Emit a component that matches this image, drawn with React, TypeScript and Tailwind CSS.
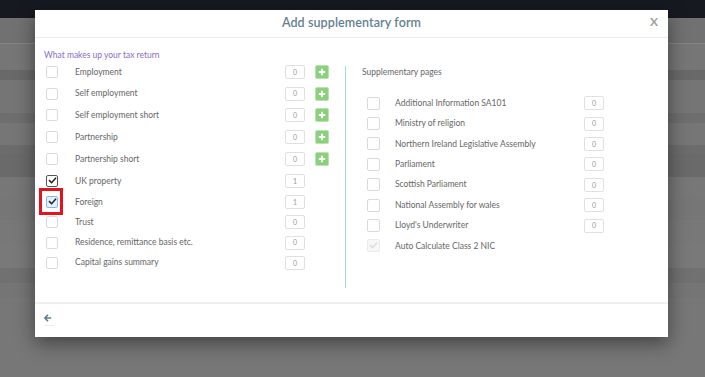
import React from 'react';

const mainRows = [
  { label: 'Employment', value: '0', plus: true, h: 'h-[21.8px]' },
  { label: 'Self employment', value: '0', plus: true, h: 'h-[21.8px]' },
  { label: 'Self employment short', value: '0', plus: true, h: 'h-[21.8px]' },
  { label: 'Partnership', value: '0', plus: true, h: 'h-[21.8px]' },
  { label: 'Partnership short', value: '0', plus: true, h: 'h-[21.8px]' },
  { label: 'UK property', value: '1', checked: true, h: 'h-[21.8px]' },
  { label: 'Foreign', value: '1', checked: true, focused: true, h: 'h-[20.3px]' },
  { label: 'Trust', value: '0', h: 'h-[20.3px]' },
  { label: 'Residence, remittance basis etc.', value: '0', h: 'h-[20.3px]' },
  { label: 'Capital gains summary', value: '0', h: 'h-[20.3px]' },
];

const suppRows = [
  { label: 'Additional Information SA101' },
  { label: 'Ministry of religion' },
  { label: 'Northern Ireland Legislative Assembly' },
  { label: 'Parliament' },
  { label: 'Scottish Parliament' },
  { label: 'National Assembly for wales' },
  { label: "Lloyd's Underwriter" },
  { label: 'Auto Calculate Class 2 NIC', disabled: true },
];

const bands = [
  { h: 'h-[18px]', c: 'bg-[#161a20]' },
  { h: 'h-[25px]', c: 'bg-[#717171]' },
  { h: 'h-[1px]', c: 'bg-[#858585]' },
  { h: 'h-[26px]', c: 'bg-[#767676]' },
  { h: 'h-[10px]', c: 'bg-[#696969]' },
  { h: 'h-[33px]', c: 'bg-[#757575]' },
  { h: 'h-[10px]', c: 'bg-[#6e6e6e]' },
  { h: 'h-[22px]', c: 'bg-[#767676]' },
  { h: 'h-[10px]', c: 'bg-[#6c6c6c]' },
  { h: 'h-[22px]', c: 'bg-[#6a6a6a]' },
  { h: 'h-[21px]', c: 'bg-[#777777]' },
  { h: 'h-[22px]', c: 'bg-[#767676]' },
  { h: 'h-[23px]', c: 'bg-[#787878]' },
  { h: 'h-[25px]', c: 'bg-[#797979]' },
  { h: 'h-[15px]', c: 'bg-[#717171]' },
  { h: 'h-[15px]', c: 'bg-[#757575]' },
  { h: 'h-[79px]', c: 'bg-[#777777]' },
];

const Check: React.FC<{ color?: string }> = ({ color = '#222' }) => (
  <svg viewBox="0 0 12 12" className="w-[9px] h-[9px]">
    <path d="M2 6.2 L4.8 9 L10 3" fill="none" stroke={color} strokeWidth="2" strokeLinecap="square" />
  </svg>
);

const Box: React.FC<{ checked?: boolean; focused?: boolean; disabled?: boolean; size: string }> = ({
  checked,
  focused,
  disabled,
  size,
}) => {
  let cls = 'border-[#dadada] bg-white';
  if (checked) cls = 'border-[#555] bg-white';
  if (focused) cls = 'border-[#8ab8e6] bg-[#e3f0fd]';
  if (disabled) cls = 'border-[#ebebeb] bg-[#f7f7f7]';
  return (
    <div className={`${size} shrink-0 border rounded-[2px] flex items-center justify-center ${cls}`}>
      {checked && <Check />}
      {disabled && <Check color="#dcdcdc" />}
    </div>
  );
};

const NumBox: React.FC<{ value: string }> = ({ value }) => (
  <div className="w-[20px] h-[14px] shrink-0 border border-[#e0e0e0] rounded-[2px] bg-white flex items-center justify-center text-[7px] text-[#999]">
    {value}
  </div>
);

const PlusBtn: React.FC = () => (
  <div className="ml-[10px] w-[14px] h-[14px] rounded-[2px] bg-[#8ccf7e] border border-[#b7e4a8] flex items-center justify-center">
    <svg viewBox="0 0 10 10" className="w-[8px] h-[8px]">
      <path d="M5 1 V9 M1 5 H9" stroke="#fff" strokeWidth="2.2" />
    </svg>
  </div>
);

const App: React.FC = () => {
  return (
    <div className="relative w-[705px] h-[377px] overflow-hidden" style={{ fontFamily: 'Lato, "Open Sans", sans-serif' }}>
      {bands.map((b, i) => (
        <div key={i} className={`${b.h} ${b.c} w-full`} />
      ))}

      <div className="absolute left-[35px] top-[10px] w-[633px] h-[327px] bg-white flex flex-col shadow-[0_6px_18px_rgba(0,0,0,0.45)]">
        <div className="relative h-[28px] border-b border-[#ececec] flex items-center justify-center">
          <span className="text-[12.5px] font-semibold text-[#63808f] tracking-[0.1px]">Add supplementary form</span>
          <span className="absolute right-[10px] top-[3px] text-[12px] font-bold text-[#a0a0a0]">X</span>
        </div>

        <div className="flex h-[264px]">
          <div className="w-[310px] pl-[9px] pt-[12px]">
            <div className="h-[11px] leading-[11px] text-[8.5px] text-[#8a6cc4]">What makes up your tax return</div>
            <div>
              {mainRows.map((r) => (
                <div key={r.label} className={`${r.h} flex items-center pl-[2px]`}>
                  <div className="relative">
                    <Box size="w-[12px] h-[12px]" checked={r.checked} focused={r.focused} />
                    {r.focused && (
                      <div className="absolute -left-[7px] -top-[8px] w-[24px] h-[27px] border-[3px] border-[#e3141c]" />
                    )}
                  </div>
                  <div className="ml-[17px] w-[210px] text-[8.5px] text-[#666]">{r.label}</div>
                  <NumBox value={r.value} />
                  {r.plus && <PlusBtn />}
                </div>
              ))}
            </div>
          </div>

          <div className="mt-[28px] h-[222px] border-l border-[#a7d8dc] pl-[16px] flex-1">
            <div className="h-[12px] leading-[12px] text-[8.5px] text-[#666]">Supplementary pages</div>
            <div className="mt-[15px]">
              {suppRows.map((r) => (
                <div key={r.label} className="h-[20.4px] flex items-center pl-[5px]">
                  <Box size="w-[13px] h-[13px]" disabled={r.disabled} />
                  <div className="ml-[15px] w-[189px] text-[8.5px] text-[#666]">{r.label}</div>
                  {!r.disabled && <NumBox value="0" />}
                </div>
              ))}
            </div>
          </div>
        </div>

        <div className="flex-1 border-t-2 border-[#f0f0f0] pl-[9px] pt-[10px]">
          <svg viewBox="0 0 10 10" className="w-[8px] h-[8px]">
            <path d="M5 1 L1 5 L5 9 M1.5 5 H9" fill="none" stroke="#5c7d8e" strokeWidth="2" />
          </svg>
          <div className="mt-[3px] w-[10px] h-[1px] bg-[#eeeeee]" />
        </div>
      </div>
    </div>
  );
};

export default App;
